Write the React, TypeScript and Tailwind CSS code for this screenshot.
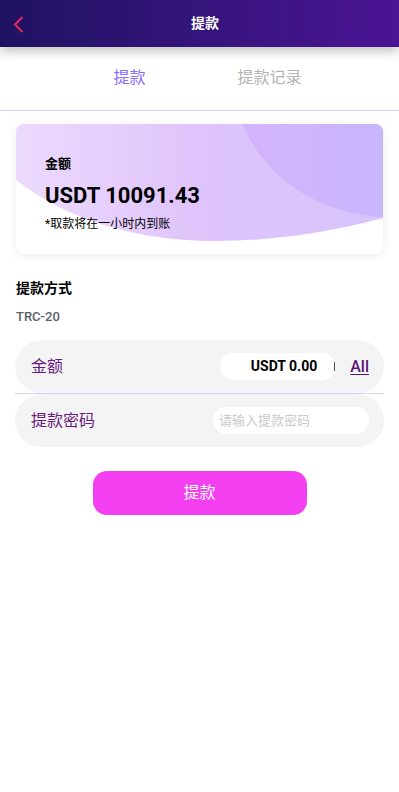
const font = {
  fontFamily: '"Roboto", "Noto Sans CJK SC", sans-serif',
};

function CardArt() {
  return (
    <svg
      className="absolute inset-0 h-full w-full"
      viewBox="0 0 368 130"
      preserveAspectRatio="none"
    >
      <defs>
        <linearGradient id="card-bg" x1="0" y1="0" x2="1" y2="0">
          <stop offset="0" stopColor="#ecdafe" />
          <stop offset="0.5" stopColor="#dfc3fb" />
          <stop offset="1" stopColor="#d6c4fc" />
        </linearGradient>
        <linearGradient id="card-blob" x1="0" y1="0" x2="1" y2="0">
          <stop offset="0" stopColor="#d3b4fc" />
          <stop offset="1" stopColor="#c8b6fc" />
        </linearGradient>
      </defs>
      <path
        d="M0 56 C 50 95, 120 117, 200 117 C 270 117, 330 104, 368 94 V0 H0 Z"
        fill="url(#card-bg)"
      />
      <path d="M227 0 C 250 55, 305 90, 368 93 V0 Z" fill="url(#card-blob)" />
    </svg>
  );
}

export default function App() {
  return (
    <div className="min-h-[792px] w-full bg-white" style={font}>
      {/* header */}
      <div className="relative z-10 flex h-[47px] items-center justify-center bg-gradient-to-r from-[#1f1262] to-[#4b1495] shadow-[0_5px_10px_rgba(0,0,0,0.22)]">
        <button className="absolute left-[13px] top-[16px] text-[#e8285a]">
          <svg width="11" height="17" viewBox="0 0 11 17" fill="none">
            <path d="M9.5 1 L2 8.5 L9.5 16" stroke="currentColor" strokeWidth="2" />
          </svg>
        </button>
        <span className="pl-[11px] text-[14px] font-bold text-white">提款</span>
      </div>

      {/* tabs */}
      <div className="flex h-[64px] items-center justify-center border-b border-b-[#e6cdfd]">
        <div className="w-[140px] pb-[1px] text-center text-[16px] text-[#8a6cff]">提款</div>
        <div className="w-[140px] pb-[1px] text-center text-[16px] text-[#b3b3b3]">提款记录</div>
      </div>

      {/* balance card */}
      <div className="px-4 pt-[13px]">
        <div className="relative h-[130px] overflow-hidden rounded-[8px] bg-white shadow-[0_2px_10px_rgba(0,0,0,0.08)]">
          <CardArt />
          <div className="relative pl-[29px] pt-[31px]">
            <div className="text-[13px] font-bold leading-[18px] text-black">金额</div>
            <div className="mt-[9px] text-[22px] font-bold leading-[28px] text-black">
              USDT 10091.43
            </div>
            <div className="mt-[6px] text-[12px] leading-[16px] text-black">*取款将在一小时内到账</div>
          </div>
        </div>
      </div>

      {/* method */}
      <div className="px-4 pt-[24px]">
        <div className="text-[14px] font-bold leading-[20px] text-black">提款方式</div>
        <div className="mt-[10px] text-[13px] font-medium leading-[18px] text-[#59606b]">TRC-20</div>
      </div>

      {/* form */}
      <div className="mt-[14px] px-[15px]">
        <div className="flex h-[53px] items-center rounded-[27px] bg-[#f4f4f4] pl-[16px] pr-[15px]">
          <span className="flex-1 text-[16px] text-[#6a1a7d]">金额</span>
          <div className="flex h-[27px] w-[115px] items-center justify-end rounded-full bg-white pr-[18px] text-[14px] font-bold text-black">
            USDT 0.00
          </div>
          <span className="ml-[-1px] h-[9px] w-[1px] bg-[#555]" />
          <span className="ml-[15px] text-[16px] font-medium text-[#5a1476] underline underline-offset-2">
            All
          </span>
        </div>
        <div className="h-[1px] bg-[#e2cbf8]" />
        <div className="flex h-[53px] items-center rounded-[27px] bg-[#f4f4f4] pl-[16px] pr-[15px]">
          <span className="flex-1 text-[16px] text-[#6a1a7d]">提款密码</span>
          <input
            placeholder="请输入提款密码"
            className="h-[27px] w-[156px] rounded-full bg-white px-[6px] text-[13px] text-black outline-none placeholder:text-[#c9c9c9]"
            style={font}
          />
        </div>
      </div>

      {/* submit */}
      <div className="mt-[24px] flex justify-center">
        <button className="h-[44px] w-[214px] rounded-[14px] bg-[#f43ff0] text-[16px] text-white" style={font}>
          提款
        </button>
      </div>
    </div>
  );
}
